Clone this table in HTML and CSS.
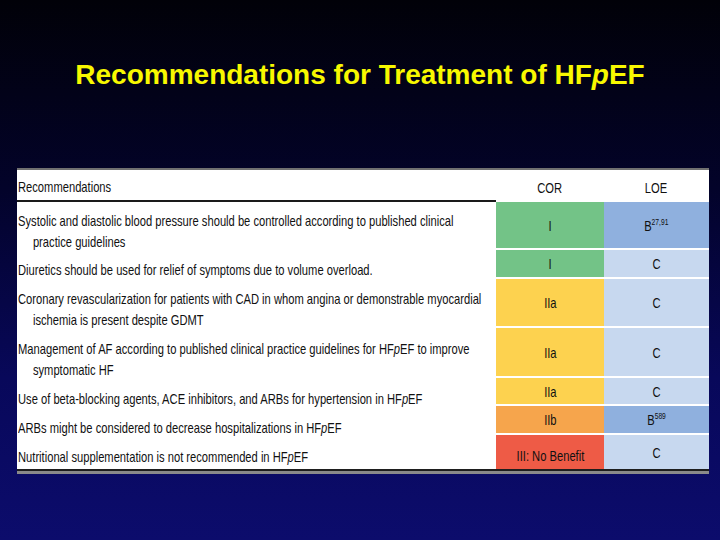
FILE: index.html
```html
<!DOCTYPE html>
<html>
<head>
<meta charset="utf-8">
<link rel="stylesheet" href="styles.css">
</head>
<body>
<div class="slide">
  <h1 class="title">Recommendations for Treatment of HF<i>p</i>EF</h1>
  <div class="table">
    <div class="thead">
      <div class="th th-rec"><span class="t">Recommendations</span></div>
      <div class="th"><span class="t">COR</span></div>
      <div class="th"><span class="t">LOE</span></div>
    </div>
    <div class="tbody">
      <div class="rec r1"><span class="t">Systolic and diastolic blood pressure should be controlled according to published clinical<br>practice guidelines</span></div>
      <div class="cor green"><span class="t">I</span></div>
      <div class="loe dark"><span class="t">B<sup>27,91</sup></span></div>

      <div class="rec r2"><span class="t">Diuretics should be used for relief of symptoms due to volume overload.</span></div>
      <div class="cor green"><span class="t">I</span></div>
      <div class="loe"><span class="t">C</span></div>

      <div class="rec r3"><span class="t">Coronary revascularization for patients with CAD in whom angina or demonstrable myocardial<br>ischemia is present despite GDMT</span></div>
      <div class="cor yellow"><span class="t">IIa</span></div>
      <div class="loe"><span class="t">C</span></div>

      <div class="rec r4"><span class="t">Management of AF according to published clinical practice guidelines for HF<i>p</i>EF to improve<br>symptomatic HF</span></div>
      <div class="cor yellow"><span class="t">IIa</span></div>
      <div class="loe"><span class="t">C</span></div>

      <div class="rec r5"><span class="t">Use of beta-blocking agents, ACE inhibitors, and ARBs for hypertension in HF<i>p</i>EF</span></div>
      <div class="cor yellow"><span class="t">IIa</span></div>
      <div class="loe"><span class="t">C</span></div>

      <div class="rec r6"><span class="t">ARBs might be considered to decrease hospitalizations in HF<i>p</i>EF</span></div>
      <div class="cor orange"><span class="t">IIb</span></div>
      <div class="loe dark"><span class="t">B<sup>589</sup></span></div>

      <div class="rec r7"><span class="t">Nutritional supplementation is not recommended in HF<i>p</i>EF</span></div>
      <div class="cor red"><span class="t">III: No Benefit</span></div>
      <div class="loe"><span class="t">C</span></div>
    </div>
  </div>
</div>
</body>
</html>
```
FILE: styles.css
```css
html, body {
  margin: 0;
  padding: 0;
}
.slide {
  width: 720px;
  height: 540px;
  background: linear-gradient(to bottom, #010108 0%, #03032a 35%, #08085a 70%, #0c0c6c 100%);
  overflow: hidden;
  padding-top: 58px;
  box-sizing: border-box;
}
.title {
  margin: 0;
  text-align: center;
  font-family: "Liberation Sans", Arial, sans-serif;
  font-weight: bold;
  font-size: 28px;
  line-height: 34px;
  color: #f8f800;
}
.title i {
  font-style: italic;
}
.table {
  margin: 76px 0 0 17px;
  width: 692px;
  background: #ffffff;
  border-top: 2px solid #707070;
  border-bottom: 2px solid #1e1e1e;
  box-shadow: 0 3px 0 #8a8a8a;
  font-family: "Liberation Sans", Arial, sans-serif;
  font-size: 15px;
  color: #111111;
}
.t {
  display: inline-block;
  white-space: nowrap;
  transform: scaleX(0.745);
}
.thead {
  display: grid;
  grid-template-columns: 479px 108px 105px;
  height: 32px;
}
.th {
  display: flex;
  align-items: center;
  justify-content: center;
  padding-top: 3px;
  box-sizing: border-box;
  height: 31px;
}
.th-rec {
  justify-content: flex-start;
  padding-left: 1px;
  border-bottom: 2px solid #1a1a1a;
  height: 32px;
}
.th-rec .t {
  transform-origin: left center;
}
.tbody {
  display: grid;
  grid-template-columns: 479px 108px 105px;
  grid-template-rows: 46px 27px 47px 48px 26px 27px 34px;
  row-gap: 2px;
}
.rec {
  line-height: 21px;
  padding: 8px 0 0 1px;
  height: 0;
}
.rec .t {
  transform-origin: left top;
  padding-left: 20px;
  text-indent: -20px;
}
.r2, .r3 { padding-top: 9px; }
.r4, .r5 { padding-top: 10px; }
.r6, .r7 { padding-top: 11px; }
.cor, .loe {
  display: flex;
  align-items: center;
  justify-content: center;
}
.green { background: #73c387; }
.yellow { background: #fdd24f; }
.orange { background: #f6a54c; }
.red { background: #ee5b46; padding-top: 6px; box-sizing: border-box; }
.loe { background: #c7d8ef; }
.loe.dark { background: #8fb0de; }
.loe sup {
  font-size: 9px;
  vertical-align: 6px;
  line-height: 0;
}
```
